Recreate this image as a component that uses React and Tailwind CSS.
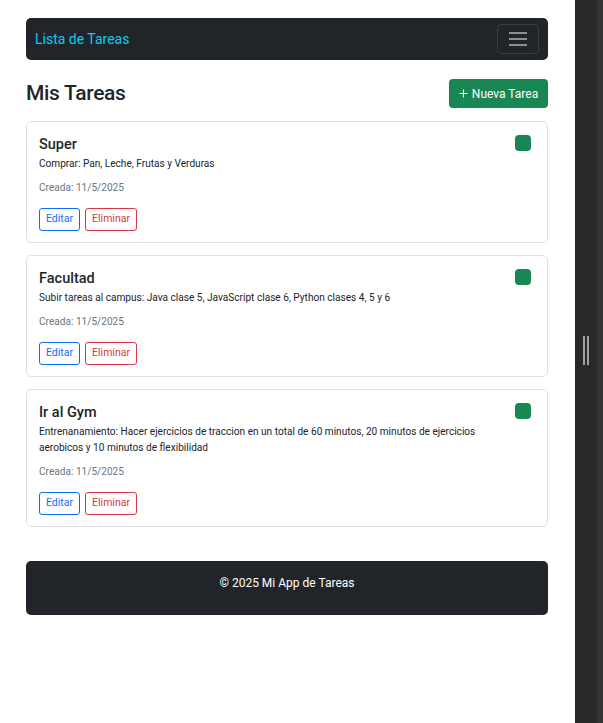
import React from "react";

const tasks = [
  {
    title: "Super",
    desc: "Comprar: Pan, Leche, Frutas y Verduras",
    date: "11/5/2025",
  },
  {
    title: "Facultad",
    desc: "Subir tareas al campus: Java clase 5, JavaScript clase 6, Python clases 4, 5 y 6",
    date: "11/5/2025",
  },
  {
    title: "Ir al Gym",
    desc: "Entrenanamiento: Hacer ejercicios de traccion en un total de 60 minutos, 20 minutos de ejercicios aerobicos y 10 minutos de flexibilidad",
    date: "11/5/2025",
  },
];

function TaskCard({ t }) {
  return (
    <div className="relative border border-[#dfe0e1] rounded-[5px] bg-white pt-[13px] pb-[11px] pl-[12px] pr-[40px]">
      <div className="absolute top-[13px] right-[16px] w-[16px] h-[16px] rounded-[4px] bg-[#198754]" />
      <div className="text-[14.5px] leading-[20px] font-medium text-[#212529]">{t.title}</div>
      <div className="mt-[1px] text-[10.1px] leading-[16px] text-[#212529]">{t.desc}</div>
      <div className="mt-[8px] text-[10.1px] leading-[16px] text-[#6c757d]">Creada: {t.date}</div>
      <div className="mt-[12px] flex gap-[5px]">
        <button className="h-[23px] px-[6px] border border-[#0d6efd] rounded-[3px] text-[10.5px] leading-none text-[#0d6efd] bg-white">
          Editar
        </button>
        <button className="h-[23px] px-[6px] border border-[#dc3545] rounded-[3px] text-[10.5px] leading-none text-[#dc3545] bg-white">
          Eliminar
        </button>
      </div>
    </div>
  );
}

export default function App() {
  return (
    <div
      className="flex w-[603px] h-[723px] overflow-hidden bg-white"
      style={{ fontFamily: 'Roboto, "Noto Sans", sans-serif' }}
    >
      <div className="w-[575px] shrink-0 bg-white pl-[26px] pr-[27px] pt-[18px]">
        <nav className="h-[42px] rounded-[5px] bg-[#212529] flex items-center justify-between pl-[9px] pr-[9px]">
          <span className="text-[14px] text-[#0dcaf0]">Lista de Tareas</span>
          <span className="w-[42px] h-[30px] border border-[#3a3d41] rounded-[4px] flex flex-col items-center justify-center gap-[4px]">
            <span className="block w-[18px] h-[2px] bg-[#8c8f92]" />
            <span className="block w-[18px] h-[2px] bg-[#8c8f92]" />
            <span className="block w-[18px] h-[2px] bg-[#8c8f92]" />
          </span>
        </nav>

        <div className="mt-[19px] flex items-center justify-between">
          <h2 className="text-[21px] leading-[27px] font-medium tracking-[-0.3px] text-[#212529]">Mis Tareas</h2>
          <button className="h-[29px] w-[99px] rounded-[4px] bg-[#198754] text-white text-[12px] flex items-center justify-center gap-[4px]">
            <svg width="9" height="9" viewBox="0 0 9 9" fill="none" stroke="white" strokeWidth="1.1">
              <path d="M4.5 0.5v8M0.5 4.5h8" />
            </svg>
            <span>Nueva Tarea</span>
          </button>
        </div>

        <div className="mt-[13px] flex flex-col gap-[12px]">
          {tasks.map((t) => (
            <TaskCard key={t.title} t={t} />
          ))}
        </div>

        <footer className="mt-[34px] h-[54px] rounded-[5px] bg-[#212529] flex justify-center pt-[13px]">
          <span className="text-[12px] leading-[18px] text-white">© 2025 Mi App de Tareas</span>
        </footer>
      </div>
      <div className="flex-1 flex bg-[#282828]">
        <div className="w-[22px] flex items-center justify-center gap-[2px] pb-[22px]">
          <span className="block w-[2px] h-[29px] bg-[#a0a0a0]" />
          <span className="block w-[2px] h-[29px] bg-[#a0a0a0]" />
        </div>
        <div className="flex-1 bg-[#333333]" />
      </div>
    </div>
  );
}
